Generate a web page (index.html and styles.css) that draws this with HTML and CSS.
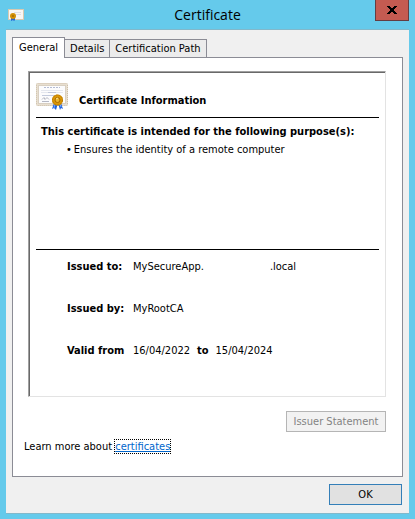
FILE: index.html
```html
<!DOCTYPE html>
<html lang="en">
<head>
  <meta charset="UTF-8" />
  <meta name="viewport" content="width=device-width, initial-scale=1" />
  <title>Certificate</title>
  <link rel="stylesheet" href="styles.css">
</head>
<body>
  <div class="window">
    <header class="titlebar">
      <svg class="titlebar-icon" width="16" height="14" viewBox="0 0 16 14" aria-hidden="true">
        <rect x="0.5" y="0.5" width="15" height="10" fill="#f8f6f3" stroke="#d8c9b0" />
        <path d="M6 3.5h7M8 5.5h5" stroke="#dcdde6" />
        <path d="M3 8v4l2-1 1 1 1-1V8z" fill="#2463d8" />
        <circle cx="5" cy="7" r="3" fill="#d18f05" />
        <circle cx="5" cy="7" r="1" fill="#a56b00" />
      </svg>
      <h1>Certificate</h1>
      <button class="close" aria-label="Close">
        <svg width="10" height="8" viewBox="0 0 10 8" aria-hidden="true">
          <path d="M0 0h3v1h1v1h2V1h1V0h3v1H9v1H8v1H7v2h1v1h1v1h1v1H7V7H6V6H4v1H3v1H0V7h1V6h1V5h1V3H2V2H1V1H0z" fill="#000" />
        </svg>
      </button>
    </header>

    <main class="dialog">
      <div class="tabs" role="tablist">
        <button class="tab active" role="tab" aria-selected="true">General</button>
        <button class="tab" role="tab" aria-selected="false">Details</button>
        <button class="tab" role="tab" aria-selected="false">Certification Path</button>
      </div>

      <section class="panel" role="tabpanel">
        <div class="info">
          <div class="info-head">
            <svg width="32" height="28" viewBox="0 0 32 28" aria-hidden="true">
              <rect x="0.5" y="0.5" width="31" height="22" rx="1" fill="#e8dfd0" stroke="#c9baa2" />
              <rect x="0.5" y="0.5" width="31" height="22" rx="1" fill="none" stroke="#eee7dc" stroke-dasharray="1 1" />
              <rect x="2.5" y="2.5" width="27" height="18" fill="#fcfcfd" stroke="#d9d0c2" />
              <path d="M8 4.5h16" stroke="#b5bcd3" stroke-dasharray="2 1" />
              <path d="M5 7.5h22M5 9.5h22" stroke="#e4e7ee" />
              <path d="M12 9.5h8M6 12.5h14" stroke="#c3cadc" />
              <path d="M6 16.5l2-2 1 2 2-2 2 2M6 18.5h7" fill="none" stroke="#b5b7c3" />
              <path d="M18 20l-2 6 2-1 2 2 2-7z" fill="#1f62df" />
              <path d="M22 20l2 7 1-2 2 1-2-6z" fill="#1f62df" />
              <path d="M19 21l-1 4M24 21l1 3" stroke="#71a7ff" />
              <circle cx="21.5" cy="17" r="5.5" fill="#d99606" />
              <circle cx="21.5" cy="17" r="5" fill="none" stroke="#b87803" stroke-dasharray="2 1" />
              <circle cx="21.5" cy="17" r="2.5" fill="#e9b430" stroke="#a96a00" />
              <path d="M20 16l2-1" stroke="#ffe48b" />
            </svg>
            <h2>Certificate Information</h2>
          </div>

          <div class="purpose">
            <h3>This certificate is intended for the following purpose(s):</h3>
            <ul>
              <li>Ensures the identity of a remote computer</li>
            </ul>
          </div>

          <dl class="details">
            <dt>Issued to:</dt>
            <dd>MySecureApp.<span class="hidden-domain"></span>.local</dd>
            <dt>Issued by:</dt>
            <dd>MyRootCA</dd>
            <dt>Valid from</dt>
            <dd class="dates">16/04/2022 <b>to</b> 15/04/2024</dd>
          </dl>
        </div>

        <button class="button statement" disabled>Issuer Statement</button>
        <p class="learn">Learn more about <a href="#certificates">certificates</a></p>
      </section>

      <button class="button ok">OK</button>
    </main>
  </div>
</body>
</html>
```
FILE: styles.css
```css
* { box-sizing: border-box; }
body { margin: 0; background: #65caeb; color: #000; font: 11px/14px "DejaVu Sans Condensed", "DejaVu Sans", sans-serif; }
h1, h2, h3, p, ul, dl, dd { margin: 0; padding: 0; }
h2, h3 { font-size: 11px; line-height: 14px; }
button { font: inherit; color: inherit; padding: 0; }

.window { min-height: 100vh; padding: 0 6px; display: flex; flex-direction: column; }
.titlebar { display: grid; grid-template-columns: 34px 1fr 34px; height: 29px; }
.titlebar-icon { margin: 9px 0 0 2px; }
.titlebar h1 { font: 14px/30px "Open Sans", sans-serif; text-align: center; }
.close { height: 21px; background: #c45b51; border: 1px solid #643d42; border-top: 0; display: grid; place-items: center; }

.dialog { background: #f0f0f0; border-top: 1px solid #82b8ca; border-bottom: 1px solid #82b8ca; padding: 7px 6px 8px; display: flex; flex-direction: column; }
.tabs { display: flex; align-items: flex-end; }
.tab { height: 18px; padding: 0 5px; background: #ececec; border: 1px solid #8b8c95; border-bottom: 0; border-left: 0; white-space: nowrap; }
.tab.active { height: 21px; padding: 0 6px; margin-bottom: -1px; background: #fff; border-left: 1px solid #8b8c95; position: relative; }

.panel { background: #fff; border: 1px solid #8b8c95; padding: 13px 16px 22px 11px; display: flex; flex-direction: column; }
.info { margin-left: 4px; border: 1px solid #e3e3e3; border-top-color: #a0a0a0; border-left-color: #a0a0a0; box-shadow: inset 1px 1px #696969; padding: 11px 6px 38px 7px; }
.info-head { display: flex; align-items: center; gap: 11px; height: 35px; padding-bottom: 7px; border-bottom: 1px solid #000; }
.info-head h2 { padding-top: 8px; }
.purpose { min-height: 132px; padding: 7px 0 0 5px; border-bottom: 1px solid #000; }
.purpose ul { list-style: none; padding: 4px 0 0 25px; }
.purpose li::before { content: "•"; margin-right: 2px; }
.details { display: grid; grid-template-columns: 66px 1fr; row-gap: 28px; padding: 10px 0 0 31px; }
.details dt { font-weight: bold; white-space: nowrap; }
.hidden-domain { display: inline-block; width: 66px; }
.dates { display: flex; gap: 7px; }

.button { height: 21px; background: #e1e1e1; border: 1px solid #347fb8; }
.statement { align-self: flex-end; width: 100px; margin-top: 14px; background: #f2f2f2; border-color: #b5b5b5; color: #838383; }
.learn { margin-top: 8px; }
.learn a { color: #0066cc; outline: 1px dotted #000; }
.ok { align-self: flex-end; width: 73px; margin: 7px 1px 0 0; }
```
